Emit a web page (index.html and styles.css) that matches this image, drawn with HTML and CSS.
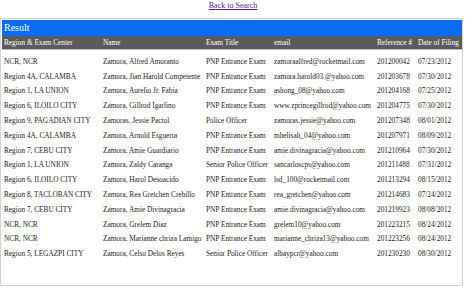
FILE: index.html
```html
<!DOCTYPE html>
<html>
<head>
<meta charset="utf-8">
<link rel="stylesheet" href="styles.css">
</head>
<body>
<div class="top"><a class="back" href="#">Back to Search</a></div>
<div class="panel">
  <div class="panel-title">Result</div>
  <table class="results">
    <colgroup>
      <col class="c-region"><col class="c-name"><col class="c-exam"><col class="c-email"><col class="c-ref"><col class="c-date">
    </colgroup>
    <thead>
      <tr><th>Region &amp; Exam Center</th><th>Name</th><th>Exam Title</th><th>email</th><th>Reference #</th><th>Date of Filing</th></tr>
    </thead>
    <tbody>
      <tr><td>NCR, NCR</td><td>Zamora, Alfred Amoranto</td><td>PNP Entrance Exam</td><td>zamoraalfred@rocketmail.com</td><td>201200042</td><td>07/23/2012</td></tr>
      <tr><td>Region 4A, CALAMBA</td><td>Zamora, Jian Harold Competente</td><td>PNP Entrance Exam</td><td>zamora.harold03.@yahoo.com</td><td>201203678</td><td>07/30/2012</td></tr>
      <tr><td>Region 1, LA UNION</td><td>Zamora, Aurelio Jr. Fabia</td><td>PNP Entrance Exam</td><td>ashong_08@yahoo.com</td><td>201204168</td><td>07/25/2012</td></tr>
      <tr><td>Region 6, ILOILO CITY</td><td>Zamora, Gillrod Igarlino</td><td>PNP Entrance Exam</td><td>www.zprincegillrod@yahoo.com</td><td>201204775</td><td>07/30/2012</td></tr>
      <tr><td>Region 9, PAGADIAN CITY</td><td>Zamoras, Jessie Pactol</td><td>Police Officer</td><td>zamoras.jessie@yahoo.com</td><td>201207348</td><td>08/01/2012</td></tr>
      <tr><td>Region 4A, CALAMBA</td><td>Zamora, Arnold Esguerra</td><td>PNP Entrance Exam</td><td>mhelisah_04@yahoo.com</td><td>201207971</td><td>08/09/2012</td></tr>
      <tr><td>Region 7, CEBU CITY</td><td>Zamora, Amie Guardiario</td><td>PNP Entrance Exam</td><td>amie.divinagracia@yahoo.com</td><td>201210964</td><td>07/30/2012</td></tr>
      <tr><td>Region 1, LA UNION</td><td>Zamora, Zaldy Caranga</td><td>Senior Police Officer</td><td>sancarloscps@yahoo.com</td><td>201211488</td><td>07/31/2012</td></tr>
      <tr><td>Region 6, ILOILO CITY</td><td>Zamora, Harol Desoacido</td><td>PNP Entrance Exam</td><td>lsd_100@rocketmail.com</td><td>201213294</td><td>08/15/2012</td></tr>
      <tr><td>Region 8, TACLOBAN CITY</td><td>Zamora, Rea Gretchen Crebillo</td><td>PNP Entrance Exam</td><td>rea_gretchen@yahoo.com</td><td>201214683</td><td>07/24/2012</td></tr>
      <tr><td>Region 7, CEBU CITY</td><td>Zamora, Amie Divinagracia</td><td>PNP Entrance Exam</td><td>amie.divinagracia@yahoo.com</td><td>201219923</td><td>08/08/2012</td></tr>
      <tr><td>NCR, NCR</td><td>Zamora, Grelem Diaz</td><td>PNP Entrance Exam</td><td>grelem10@yahoo.com</td><td>201223215</td><td>08/24/2012</td></tr>
      <tr><td>NCR, NCR</td><td>Zamora, Marianne chriza Lamigo</td><td>PNP Entrance Exam</td><td>marianne_chriza13@yahoo.com</td><td>201223256</td><td>08/24/2012</td></tr>
      <tr><td>Region 5, LEGAZPI CITY</td><td>Zamora, Celso Delos Reyes</td><td>Senior Police Officer</td><td>albaypcr@yahoo.com</td><td>201230230</td><td>08/30/2012</td></tr>
    </tbody>
  </table>
</div>
</body>
</html>
```
FILE: styles.css
```css
html, body {
  margin: 0;
  padding: 0;
  background: #ffffff;
}
body {
  font-family: "Liberation Serif", "Times New Roman", serif;
  color: #222222;
}
.top {
  text-align: center;
  height: 17px;
  padding-top: 1px;
  font-size: 8px;
  line-height: 10px;
}
.back {
  color: #551a8b;
  text-decoration: underline;
}
.panel {
  width: 463px;
  height: 268px;
  border: 1px solid #d4d4d4;
  padding: 1px 0 0 1px;
  box-sizing: border-box;
}
.panel-title {
  background: #0b6cf3;
  color: #ffffff;
  font-size: 10px;
  height: 16px;
  line-height: 16px;
  padding-left: 2px;
}
.results {
  width: 460px;
  border-collapse: collapse;
  table-layout: fixed;
  font-size: 7.3px;
}
.c-region { width: 99px; }
.c-name { width: 103px; }
.c-exam { width: 68px; }
.c-email { width: 103px; }
.c-ref { width: 41px; }
.c-date { width: 46px; }
.results th {
  background: #5c5b5b;
  color: #ffffff;
  font-weight: normal;
  text-align: left;
  height: 13px;
  padding: 0 0 0 2px;
  white-space: nowrap;
  overflow: hidden;
  border-bottom: 1px solid #bdbdbd;
}
.results td {
  height: 14.8px;
  padding: 0 0 0 2px;
  white-space: nowrap;
  overflow: hidden;
  vertical-align: middle;
}
.results tbody tr:first-child td {
  padding-top: 4px;
}
```
